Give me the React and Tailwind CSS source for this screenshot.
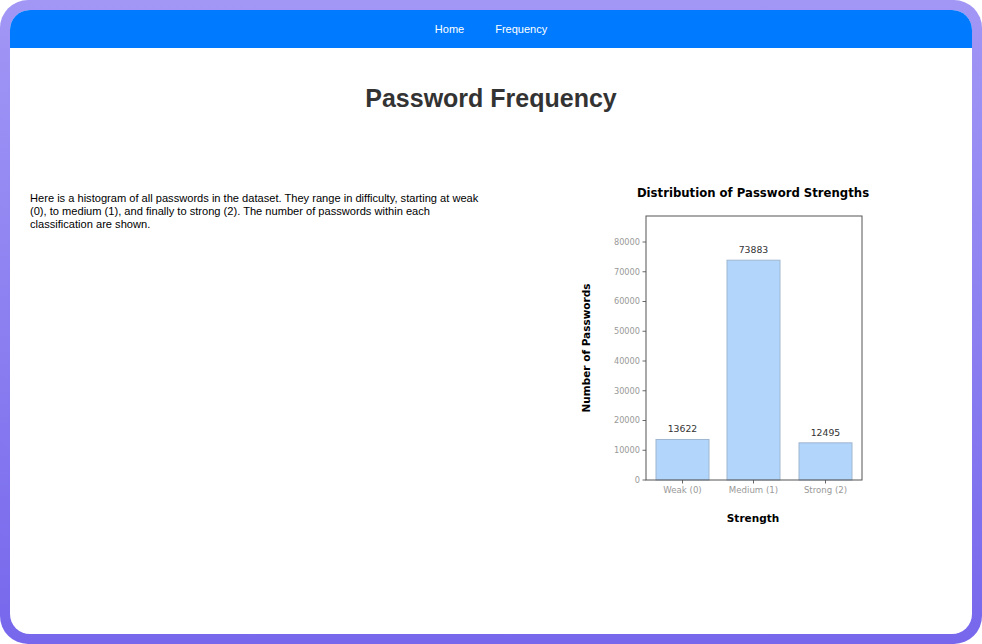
import React from "react";

const bars = [
	{ label: "Weak (0)", value: 13622, x: 86 },
	{ label: "Medium (1)", value: 73883, x: 157 },
	{ label: "Strong (2)", value: 12495, x: 229 },
];

const yTicks = [0, 10000, 20000, 30000, 40000, 50000, 60000, 70000, 80000];

// axes: x 76..292, y 36..300, 0 at y=300, 80000 at y=62
const yOf = (v) => 300 - v * 0.002975;

function StrengthChart() {
	return (
		<svg width="304" height="350" viewBox="0 0 304 350" style={{ fontFamily: "'DejaVu Sans', sans-serif" }}>
			<text x="183" y="16.5" textAnchor="middle" fontSize="11.7" fontWeight="bold" fill="#000">
				Distribution of Password Strengths
			</text>
			{bars.map((b) => (
				<g key={b.label}>
					<rect x={b.x} y={yOf(b.value)} width="53" height={300 - yOf(b.value)} fill="#b1d5fb" stroke="#9fb6d0" strokeWidth="1" />
					<text x={b.x + 26.5} y={yOf(b.value) - 7} textAnchor="middle" fontSize="9.3" fill="#333">
						{b.value}
					</text>
					<line x1={b.x + 26.5} x2={b.x + 26.5} y1="300" y2="303.5" stroke="#444" strokeWidth="0.8" />
					<text x={b.x + 26.5} y="313" textAnchor="middle" fontSize="8.6" fill="#999">
						{b.label}
					</text>
				</g>
			))}
			{yTicks.map((t) => (
				<g key={t}>
					<line x1="72.5" x2="76" y1={yOf(t)} y2={yOf(t)} stroke="#444" strokeWidth="0.8" />
					<text x="70" y={yOf(t) + 2.8} textAnchor="end" fontSize="8.2" fill="#999">
						{t}
					</text>
				</g>
			))}
			<rect x="76" y="36" width="216" height="264" fill="none" stroke="#555" strokeWidth="1" />
			<text x="183" y="342" textAnchor="middle" fontSize="10.5" fontWeight="bold" fill="#000">
				Strength
			</text>
			<text x="0" y="0" transform="translate(20 168) rotate(-90)" textAnchor="middle" fontSize="10.5" fontWeight="bold" fill="#000">
				Number of Passwords
			</text>
		</svg>
	);
}

export default function App() {
	return (
		<div className="h-screen w-full bg-white" style={{ fontFamily: "'Liberation Sans', Arial, sans-serif" }}>
			<div className="h-full w-full p-[10px] rounded-[28px] bg-linear-to-b from-[#a297f5] to-[#7767ec]">
				<div className="h-full w-full bg-white rounded-[20px] overflow-hidden flex flex-col">
					<nav className="h-[38px] bg-[#007bff] flex items-center justify-center gap-[31px] text-white text-[11px]">
						<a href="#">Home</a>
						<a href="#">Frequency</a>
					</nav>
					<h1 className="mt-[34px] text-center text-[25px] leading-[32px] font-bold text-[#333]">Password Frequency</h1>
					<div className="mt-[66px] px-[20px] flex">
						<div className="w-1/2 pt-[12px]">
							<p className="text-[11.1px] leading-[13px] text-black">
								Here is a histogram of all passwords in the dataset. They range in difficulty, starting at weak (0), to medium (1), and finally to strong (2). The number of passwords within each classification are shown.
							</p>
						</div>
						<div className="w-1/2 flex justify-center">
							<StrengthChart />
						</div>
					</div>
				</div>
			</div>
		</div>
	);
}
